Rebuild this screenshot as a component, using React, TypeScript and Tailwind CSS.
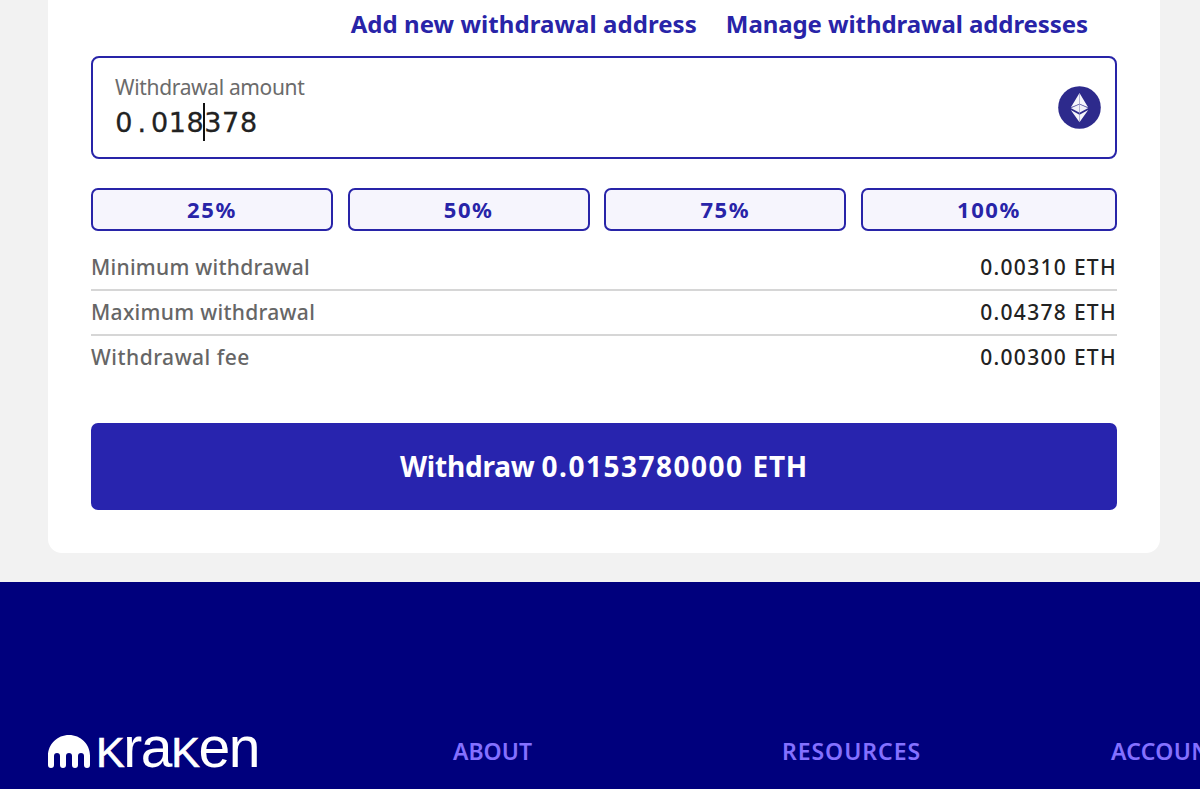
const percentages = [
  { label: "25%", className: "w-[242px]" },
  { label: "50%", className: "w-[242px]" },
  { label: "75%", className: "w-[242px]" },
  { label: "100%", className: "w-[256px]" },
];

const limits = [
  { label: "Minimum withdrawal", value: "0.00310 ETH", className: "h-[45px]", tracking: "tracking-[0.27px]" },
  { label: "Maximum withdrawal", value: "0.04378 ETH", className: "h-[45px]", tracking: "tracking-[0.3px]" },
  { label: "Withdrawal fee", value: "0.00300 ETH", className: "h-[45px] pb-[2px]", tracking: "tracking-[0.5px]" },
];

function EthIcon() {
  return (
    <svg width="43" height="43" viewBox="0 0 43 43" fill="none" className="shrink-0">
      <circle cx="21.5" cy="21.5" r="21.3" fill="#2d2a8c" />
      <polygon points="21.5,7 12.8,21.6 21.5,18.1 30.2,21.6" fill="#f6f6fb" />
      <polygon points="21.5,18.1 12.8,21.9 21.5,26.7 30.2,21.9" fill="#f0f0f8" />
      <polygon points="12.8,23.9 21.5,28.7 30.2,23.9 21.5,36.2" fill="#f6f6fb" />
      <path d="M13 21.7L21.5 18.1L30 21.7" stroke="#6361a9" strokeWidth="0.8" />
      <path d="M21.5 7V36" stroke="#8c8abf" strokeWidth="0.6" />
    </svg>
  );
}

function KrakenMark() {
  return (
    <svg width="42" height="33" viewBox="0 0 42 33" fill="#fff" className="shrink-0">
      <path d="M21 0C9.4 0 0 9.2 0 20.6V30a3 3 0 0 0 6 0V21a3 3 0 0 1 6 0V30a3 3 0 0 0 6 0V21a3 3 0 0 1 6 0V30a3 3 0 0 0 6 0V21a3 3 0 0 1 6 0V30a3 3 0 0 0 6 0V20.6C42 9.2 32.6 0 21 0Z" />
    </svg>
  );
}

function AmountField() {
  return (
    <div className="mt-[18px] flex h-[103px] items-center justify-between rounded-[8px] border-2 border-[#2824a8] pl-[22px] pr-[14.5px]">
      <div className="flex flex-col">
        <span className="-mt-[2px] mb-[1px] text-[21px] leading-[30px] tracking-[-0.34px] text-[#6b6b6b]">Withdrawal amount</span>
        <div className="relative flex h-[38px] items-center font-['DejaVu_Sans'] text-[27px] leading-[38px] text-[#222]">
          {"0.018378".split("").map((char, i) => (
            <span key={i} className="w-[17.8px] pt-[2px] text-center [-webkit-text-stroke:0.3px_#222]">{char}</span>
          ))}
          <span className="absolute left-[88px] top-0 h-[38px] w-[2px] bg-[#111]" />
        </div>
      </div>
      <EthIcon />
    </div>
  );
}

function Footer() {
  return (
    <footer className="mt-[29px] flex h-[207px] w-[1300px] shrink-0 items-start bg-[#00007d] pl-12 pt-[153px] text-[23px] font-semibold leading-[32px] text-[#8470ff]">
      <div className="flex h-[36px] w-[405px] items-start gap-[6px] text-white">
        <KrakenMark />
        <div className="-mt-[18px] flex items-baseline font-['Liberation_Sans'] text-[57px] font-normal leading-[60px] tracking-[-1.4px]">
          <span className="text-[43px] [-webkit-text-stroke:0.6px_white]">K</span>
          <span>ra</span>
          <span className="text-[43px] [-webkit-text-stroke:0.6px_white]">K</span>
          <span>en</span>
        </div>
      </div>
      <span className="w-[329px]">ABOUT</span>
      <span className="w-[329px] tracking-[0.95px]">RESOURCES</span>
      <span className="tracking-[0.3px]">ACCOUNT</span>
    </footer>
  );
}

export default function App() {
  return (
    <div className="flex h-[789px] w-[1200px] flex-col overflow-hidden bg-[#f2f2f2] font-['Noto_Sans',sans-serif]">
      <main className="ml-12 h-[553px] w-[1112px] shrink-0 rounded-b-[14px] bg-white pl-[43px] pr-[43px]">
        <div className="flex h-[38px] justify-end gap-[29px] pr-[29px] pt-[8px] text-[24px] font-bold leading-[32px] text-[#2824a8]">
          <span className="whitespace-nowrap tracking-[0.06px]">Add new withdrawal address</span>
          <span className="whitespace-nowrap tracking-[-0.08px]">Manage withdrawal addresses</span>
        </div>
        <AmountField />
        <div className="mt-[29px] flex justify-between">
          {percentages.map(({ label, className }) => (
            <button
              key={label}
              className={`${className} h-[43px] rounded-[7px] border-2 border-[#2824a8] bg-[#f6f5fd] pb-[1px] text-[22px] font-bold leading-[38px] tracking-[1.6px] text-[#2824a8]`}
            >
              {label}
            </button>
          ))}
        </div>
        <div className="mt-[15px] divide-y-2 divide-[#d6d6d6]">
          {limits.map(({ label, value, className, tracking }) => (
            <div key={label} className={`${className} flex items-center justify-between text-[21px] font-medium`}>
              <span className={`${tracking} text-[#666]`}>{label}</span>
              <span className="tracking-[1.3px] text-[#222]">{value}</span>
            </div>
          ))}
        </div>
        <button className="mt-[42px] h-[87px] w-full rounded-[7px] bg-[#2824ae] pb-[2px] text-[28px] font-bold text-white">
          <span className="tracking-[-0.2px]">Withdraw </span>
          <span className="tracking-[1.5px]">0.0153780000 </span>
          <span className="tracking-[0.8px]">ETH</span>
        </button>
      </main>
      <Footer />
    </div>
  );
}
